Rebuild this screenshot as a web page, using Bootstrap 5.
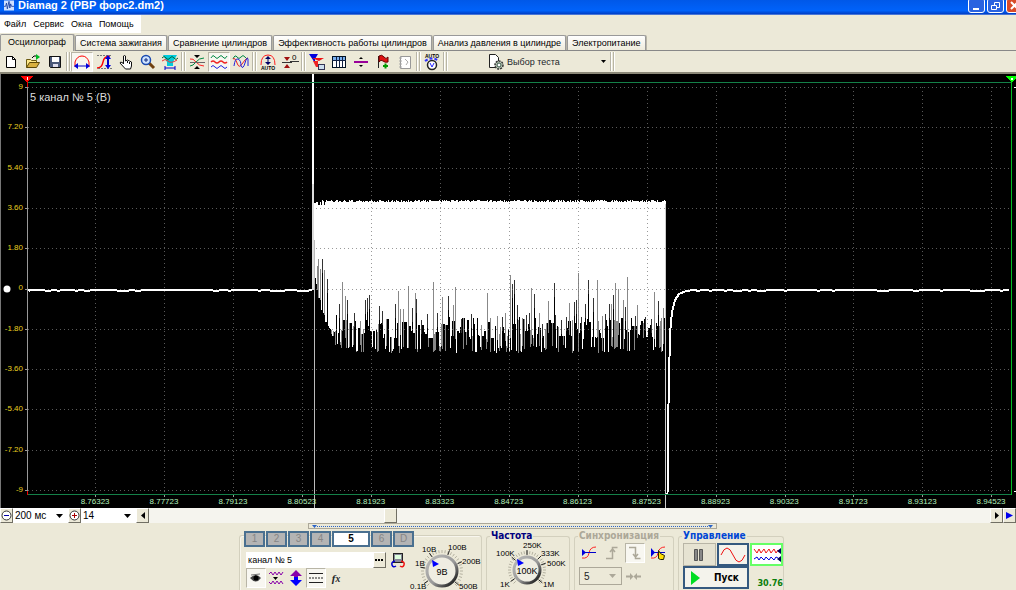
<!DOCTYPE html>
<html lang="ru">
<head>
<meta charset="utf-8">
<meta name="viewport" content="width=device-width, initial-scale=1">
<title>Diamag 2 (РВР форс2.dm2)</title>
<link href="https://cdn.jsdelivr.net/npm/bootstrap@5.3.0/dist/css/bootstrap.min.css" rel="stylesheet">
<style>
:root{--face:#ece9d8;--line:#aca899;--ui:"Liberation Sans",Arial,sans-serif}
body{font:9px/14px var(--ui);background:var(--face);color:#000}
button,input,select{font-family:inherit;border-radius:0}
.btn{--bs-btn-padding-x:0;--bs-btn-padding-y:0;--bs-btn-border-radius:0;--bs-btn-font-size:9px;--bs-btn-line-height:14px}
svg{display:block;flex:none}
.titlebar{height:15px;background:linear-gradient(#0058e8,#0062fa 70%,#0040c8 92%,#7c9ce0);color:#fff}
.titlebar h1{font:bold 11px/14px var(--ui);margin:0 0 5px}
.winbtn{width:17px;height:15px;margin-top:-4px;border:1px solid #fff;border-radius:3px;background:#2a63e0;color:#fff;padding:0}
.winbtn.shut{background:#d84a28}
.menubar{height:19px}
.menubar nav{background:#fff;padding:0 7px 0 4px;gap:7px}
.menubar a{color:#000;text-decoration:none;line-height:18px}
.tabs{height:17px;border-bottom:1px solid #888;gap:1px}
.tabs .nav-link{color:#000;height:15px;padding:0 4px;line-height:14px;border:1px solid #999;border-bottom:0;border-radius:2px 2px 0 0;background:linear-gradient(#fff,#eeebdc);white-space:nowrap;box-shadow:1px 0 0 #b8b5a6}
.tabs .nav-link.active{height:17px;margin-bottom:-1px;background:var(--face);padding:0 7px}
.toolbar{height:23px;border-bottom:2px solid #8b8878}
.tool{width:22px;height:20px;border:1px solid transparent;display:flex;align-items:center;justify-content:center}
.tool.pressed{background:#f8f7f1;border-color:#b8b5a6 #fff #fff #b8b5a6}
.sep{width:5px;height:19px;flex:none;border-left:1px solid #b8b5a6;border-right:1px solid #fff;background:linear-gradient(90deg,#fff 1px,transparent 1px,transparent 2px,#b8b5a6 2px)}
.tests{width:123px;height:20px;gap:2px;margin-left:39px;border:0}
.scope{background:#000;border-left:1px solid #777;min-height:200px;overflow:hidden}
.volts{width:25px;padding:8px 3px 0 0;color:#e8d020;font-size:8px;line-height:10px;text-align:right;z-index:1}
.times{margin-left:26px;height:13px;color:#b4f0bc;font-size:8px;line-height:13px;z-index:1}
.times span{width:6.970%;flex:none;text-align:center}
.times span:first-child{margin-left:3.400%}
.chname{color:#ddd;font-size:11px;line-height:14px;padding:16px 0 0 4px;z-index:1}
.scroller{height:15px;background:#f5f4ee}
.sq{width:13px;height:15px;flex:none;background:var(--face);border:1px solid;border-color:#fff #716f64 #716f64 #fff;display:flex;align-items:center;justify-content:center;padding:0}
.combo{appearance:none;border:0;background:#fff url("data:image/svg+xml,%3Csvg xmlns='http://www.w3.org/2000/svg' width='7' height='4'%3E%3Cpath d='M0 0h7L3.500 4z'/%3E%3C/svg%3E") no-repeat right 5px center;padding:0 0 0 2px;height:15px;width:55px;font-size:10px;line-height:15px}
.combo.off{background-color:var(--face);background-image:url("data:image/svg+xml,%3Csvg xmlns='http://www.w3.org/2000/svg' width='7' height='4'%3E%3Cpath fill='%23aca899' d='M0 0h7L3.500 4z'/%3E%3C/svg%3E");border:1px solid #aca899;height:18px;width:43px;padding-left:4px;color:#222;opacity:1}
.splitter{width:409px;height:6px;margin-left:308px;border:1px solid var(--line);padding:0 3px}
.splitter i{flex:1;height:1px;border-top:1px dotted #2a63c8}
.dock{height:61px;padding-left:239px;overflow:hidden;gap:4px}
.panel{border:1px solid #d3d0be;border-bottom:0;border-radius:3px 3px 0 0;height:64px;box-shadow:inset 1px 1px 0 #f8f6ee;flex:none}
section.panel{margin-top:6px}
fieldset.panel{height:66px;box-shadow:none}
.panel legend{font:bold 10px/14px "DejaVu Sans Condensed","DejaVu Sans",sans-serif;float:none;width:auto;padding:0 1px;margin:0 0 0 3px;color:#000080}
.chan{height:16px;border:2px solid #4a7090;background:#b4b4b4;color:#868686;font-size:10px;line-height:12px;width:21px;padding:0;flex:none}
.chan.on{background:#fff;color:#000;font-weight:bold;width:38px}
.name-in{width:127px;height:16px;border:0;background:#fff;font-size:9px;padding:0 2px;min-width:0}
.ctl{border:2px solid #35597f;background:#f4f3ec;height:23px;width:33px;display:flex;align-items:center;justify-content:center;padding:0}
.ctl.idle{border:1px solid #b8b5a6;background:#e6e3d2}
.ctl.live{border-color:#6f6;background:#fff}
.run{width:67px;font:bold 10px/14px "DejaVu Sans Condensed","DejaVu Sans",sans-serif;gap:14px;justify-content:flex-start;padding-left:6px}
.rate{font:bold 9px/12px "DejaVu Sans Condensed","DejaVu Sans",sans-serif;color:#0a7d0a}
.dial text{font:8px var(--ui)}
.dial .val{font-size:9px}
.small-t{width:20px}
</style>
</head>
<body class="vh-100 overflow-hidden d-flex flex-column">

<header class="titlebar d-flex align-items-center flex-shrink-0">
  <svg class="ms-1 mb-1" width="10" height="11" viewBox="0 0 12 12"><path fill="#cfe0ff" d="M0 0h12v12H0z"/><path d="M0 7h2l1-4 1 7 2-9 1 8 1-5 1 3h3" fill="none" stroke="#123a9c"/></svg>
  <h1 class="ms-1">Diamag 2 (РВР форс2.dm2)</h1>
  <div class="d-flex ms-auto" style="margin-right:-7px;gap:2px">
    <button class="winbtn" aria-label="Свернуть"><svg width="15" height="13"><path d="M4 9h6v2H4z" fill="#fff"/></svg></button>
    <button class="winbtn" aria-label="Восстановить"><svg width="15" height="13" fill="none" stroke="#fff"><path d="M6.500 6V3.500h5v5H9M3.500 6.500h5v4h-5z"/></svg></button>
    <button class="winbtn shut" aria-label="Закрыть"><svg width="15" height="13"><path d="M4 3l7 7M11 3l-7 7" stroke="#fff" stroke-width="2"/></svg></button>
  </div>
</header>

<div class="menubar d-flex align-items-start flex-shrink-0">
  <nav class="d-flex"><a href="#">Файл</a><a href="#">Сервис</a><a href="#">Окна</a><a href="#">Помощь</a></nav>
</div>

<ul class="nav tabs flex-nowrap align-items-end flex-shrink-0">
  <li><a class="nav-link active" href="#">Осциллограф</a></li>
  <li><a class="nav-link" href="#">Система зажигания</a></li>
  <li><a class="nav-link" href="#">Сравнение цилиндров</a></li>
  <li><a class="nav-link" href="#">Эффективность работы цилиндров</a></li>
  <li><a class="nav-link" href="#">Анализ давления в цилиндре</a></li>
  <li><a class="nav-link" href="#">Электропитание</a></li>
</ul>

<div class="toolbar d-flex align-items-center flex-shrink-0">
  <button class="btn tool" aria-label="Новый"><svg width="16" height="16"><path d="M3.500 2.500h6l3 3v8h-9z" fill="#fff" stroke="#000"/><path d="M9.500 2.500v3h3" fill="none" stroke="#000"/></svg></button>
  <button class="btn tool" aria-label="Открыть"><svg width="16" height="16"><path d="M1.500 13.500v-8h4l1 1h5v3" fill="#ffe98a" stroke="#6b5a10"/><path d="M1.500 13.500l3-5h10l-3 5z" fill="#d8b040" stroke="#5a4808"/><path d="M7 4q2-3 4-2" fill="none" stroke="#000"/><path d="M11 0v6l4-3z" fill="#0b2"/></svg></button>
  <button class="btn tool" aria-label="Сохранить"><svg width="16" height="16"><path d="M2.500 2.500h11v11h-10l-1-1z" fill="#4a5878" stroke="#111"/><path d="M5 3h7v5H5z" fill="#fff"/><path d="M6 10h5v3H6z" fill="#dde"/></svg></button>
  <span class="sep"></span>
  <button class="btn tool pressed" aria-label="Ширина"><svg width="18" height="18" fill="none"><path d="M2 14V9q2-6 7-6t7 6v5" stroke="#f00"/><path d="M3 13h12" stroke="#00c"/><path d="M1 13l4-3v6zM17 13l-4-3v6z" fill="#00d"/></svg></button>
  <button class="btn tool" aria-label="Высота"><svg width="18" height="18" fill="none"><path d="M2 15q5 0 6-6t7-6" stroke="#f00" stroke-width="1.500"/><path d="M2 2.500h14M3 15.500h14" stroke="#777" stroke-dasharray="2 1"/><path d="M13 5v8" stroke="#00c" stroke-width="2"/><path d="M13 2l-3 4h6zM13 16l-3-4h6z" fill="#00d"/></svg></button>
  <button class="btn tool" aria-label="Рука"><svg width="16" height="16"><path d="M5.500 10V2q1-1 2 0v5l2-1 2 1 2 1v4l-1 3h-5L2 9q0-2 3 0z" fill="#fff" stroke="#111"/><path d="M9.500 7v2M11.500 8v2" stroke="#111"/></svg></button>
  <button class="btn tool" aria-label="Масштаб"><svg width="16" height="16"><path d="M9 9l5 5" stroke="#704010" stroke-width="3"/><circle cx="6" cy="6" r="4.500" fill="#cfe4ff" stroke="#1a4ab0" stroke-width="1.500"/><path d="M4 6h4M6 4v4" stroke="#102a80"/></svg></button>
  <button class="btn tool" aria-label="Фильтр"><svg width="18" height="18"><path d="M2 2h14l-4 7v4H6V9z" fill="#0cd"/><path d="M1 5q2-3 4 0t4 0 4 0 4 0" fill="none" stroke="#063"/><path d="M1 8q3-3 6 0t9-1" fill="none" stroke="#e33"/><path d="M4 15h10M4 13v4M14 13v4" stroke="#00c"/></svg></button>
  <span class="sep"></span>
  <button class="btn tool" aria-label="Совместить"><svg width="18" height="18" fill="none"><path d="M9 5L6 2h6zM9 13l-3 3h6z" fill="#000"/><path d="M2 6q3-1 6 3t8 4" stroke="#f22"/><path d="M2 13q3 0 6-4t8-4" stroke="#084"/><path d="M2 9.500h15" stroke="#666"/></svg></button>
  <button class="btn tool pressed" aria-label="Раздельно"><svg width="18" height="18" fill="none"><path d="M1 5q2-4 4-1t4 0 4 0 4-1" stroke="#084"/><path d="M1 9q2-2 4 0t4 0 4 0 4 0" stroke="#e22" stroke-width="1.500"/><path d="M1 14q2-3 4 0t4 0 4 0 4 0" stroke="#22d"/></svg></button>
  <button class="btn tool" aria-label="Наложение"><svg width="18" height="18" fill="none"><path d="M1 6q2-5 4-2t4 0 4 0 3 1" stroke="#084"/><path d="M1 6q2-2 4 4t5 1 6-6" stroke="#e22"/><path d="M2 13q1-8 4-7t3 7q2 4 4-3t3-4v7" stroke="#22d"/></svg></button>
  <span class="sep"></span>
  <button class="btn tool" aria-label="Авто"><svg width="18" height="18" fill="none"><path d="M2 12Q2 2 9 2t7 10" stroke="#f22"/><path d="M9 5v6" stroke="#006"/><path d="M9 3L6 6h6zM9 12l-3-3h6z" fill="#006"/><text x="2" y="17" font-size="5" font-weight="bold" fill="#000">AUTO</text></svg></button>
  <button class="btn tool" aria-label="Ноль"><svg width="18" height="18"><path d="M1 9.500h10M9 8.500h9" stroke="#333"/><path d="M3 4h6L6 8zM3 15h6l-3-4z" fill="#a01010"/><text x="11" y="7" font-size="8">0</text></svg></button>
  <span class="sep"></span>
  <button class="btn tool" aria-label="Маркеры"><svg width="18" height="18"><path d="M1 1h9L7 6v4z" fill="#00d"/><path d="M4 5h12l-5 3z" fill="#e11"/><path d="M5 8h5v6H8z" fill="#e22"/><rect x="10.500" y="11.500" width="6" height="5" fill="#cde" stroke="#335"/></svg></button>
  <button class="btn tool" aria-label="Таблица"><svg width="16" height="16"><rect x="1.500" y="2.500" width="13" height="11" fill="#fff" stroke="#012"/><path d="M2 3h12v3H2z" fill="#7ab0f0"/><path d="M1 6.500h14M5.500 3v10M8.500 3v10M11.500 3v10" stroke="#124"/></svg></button>
  <button class="btn tool" aria-label="Разделить"><svg width="16" height="16"><path d="M1 8h14" stroke="#909" stroke-width="2"/><path d="M8 3L6 5h4zM8 13l-2-2h4z"/></svg></button>
  <button class="btn tool" aria-label="Флаг"><svg width="16" height="16"><path d="M3.500 2v12" stroke="#222"/><path d="M4 2q3-2 5 1t4 0v5q-3 1-5-1T4 8z" fill="#d11" stroke="#600"/><path d="M8 12h5M10.500 9.500v5" stroke="#090" stroke-width="2"/></svg></button>
  <button class="btn tool" aria-label="Блокнот"><svg width="16" height="16"><path d="M3.500 2.500h10v12h-10z" fill="#fff" stroke="#999"/><path d="M2 4h3M2 7h3M2 10h3M2 13h3M8 5l3 3-2 3" fill="none" stroke="#aaa"/></svg></button>
  <span class="sep"></span>
  <button class="btn tool" aria-label="Автонастройка"><svg width="18" height="18"><text x="2" y="5" font-size="5" font-weight="bold">AUTO</text><circle cx="9" cy="12" r="4.500" fill="#fff" stroke="#222" stroke-width="1.500"/><path d="M2 8q7-5 14 0" fill="none" stroke="#33f" stroke-width="2" stroke-dasharray="3 2"/><path d="M7 10l2 4 2-4" fill="none" stroke="#22f"/></svg></button>
  <span class="sep"></span>
  <button class="btn tests d-flex align-items-center"><svg width="18" height="18"><path d="M2.500 1.500h6l3 3v10h-9z" fill="#fff" stroke="#222"/><circle cx="12" cy="12" r="4" fill="#bcc8b8" stroke="#333" stroke-width="1.500" stroke-dasharray="2 1"/><circle cx="12" cy="12" r="2" fill="#fff" stroke="#354"/></svg><span>Выбор теста</span><svg class="ms-auto me-1" width="5" height="3"><path d="M0 0h5L2.500 3z"/></svg></button>
  <span class="sep"></span>
</div>

<main class="scope position-relative flex-grow-1 d-flex flex-column">
  <svg id="trace" class="position-absolute top-0 start-0 w-100 h-100" viewBox="1 0 1015 434" preserveAspectRatio="none" shape-rendering="crispEdges"></svg>
  <div class="d-flex flex-grow-1">
    <div class="volts d-flex flex-column justify-content-between">
      <span>9</span><span>7.20</span><span>5.40</span><span>3.60</span><span>1.80</span><span>0</span><span>-1.80</span><span>-3.60</span><span>-5.40</span><span>-7.20</span><span>-9</span>
    </div>
    <div class="chname">5 канал № 5 (В)</div>
  </div>
  <div class="times d-flex position-relative">
    <span>8.76323</span><span>8.77723</span><span>8.79123</span><span>8.80523</span><span>8.81923</span><span>8.83323</span><span>8.84723</span><span>8.86123</span><span>8.87523</span><span>8.88923</span><span>8.90323</span><span>8.91723</span><span>8.93123</span><span>8.94523</span>
  </div>
</main>

<div class="scroller d-flex flex-shrink-0">
  <button class="sq" aria-label="Уменьшить"><svg width="11" height="11"><circle cx="5.500" cy="5.500" r="4.500" fill="#fff" stroke="#333"/><path d="M3 5.500h5" stroke="#00a"/></svg></button>
  <select class="combo" aria-label="Развёртка"><option>200 мс</option></select>
  <button class="sq" aria-label="Увеличить"><svg width="11" height="11"><circle cx="5.500" cy="5.500" r="4.500" fill="#fff" stroke="#333"/><path d="M3 5.500h5M5.500 3v5" stroke="#a00"/></svg></button>
  <select class="combo" aria-label="Масштаб"><option>14</option></select>
  <button class="sq" aria-label="Влево"><svg width="4" height="7"><path d="M4 0v7L0 3.500z"/></svg></button>
  <div class="flex-grow-1 d-flex"><button class="sq" style="margin-left:28%" aria-label="Ползунок"></button></div>
  <button class="sq" aria-label="Вправо"><svg width="4" height="7"><path d="M0 0v7l4-3.500z"/></svg></button>
  <button class="sq" aria-label="В конец"><svg width="7" height="7"><path d="M0 0v7l7-3.500z" fill="#00e"/></svg></button>
</div>

<div class="splitter d-flex align-items-center flex-shrink-0"><svg width="5" height="3"><path d="M0 0h5L2.500 3z" fill="#2a63c8"/></svg><i></i><svg width="5" height="3"><path d="M0 0h5L2.500 3z" fill="#2a63c8"/></svg></div>

<div class="dock d-flex flex-shrink-0">
  <section class="panel d-flex" style="width:243px">
    <div class="ps-1" style="width:166px">
      <div class="d-flex position-relative" style="gap:1px;margin-top:-5px">
        <button class="chan">1</button><button class="chan">2</button><button class="chan">3</button><button class="chan">4</button><button class="chan on">5</button><button class="chan">6</button><button class="chan">D</button>
      </div>
      <div class="d-flex" style="margin:5px 0 0 2px">
        <input class="name-in" value="канал № 5" aria-label="Имя канала"><button class="sq" style="height:16px" aria-label="Выбрать"><svg width="9" height="2"><path d="M0 0h2v2H0zM3 0h2v2H3zM6 0h2v2H6z"/></svg></button>
        <svg class="ms-1" width="16" height="16"><rect x="3.500" y="1.500" width="9" height="9" fill="#889" stroke="#222"/><path d="M5 3h6v4H5z" fill="#dfd"/><path d="M5 9q-4 1-3 4t4 1" fill="none" stroke="#00c" stroke-width="1.500"/><path d="M11 9q4 1 3 4t-4 1" fill="none" stroke="#e11" stroke-width="1.500"/></svg>
      </div>
      <div class="d-flex" style="margin-left:2px">
        <button class="btn tool pressed small-t" aria-label="Видимость"><svg width="14" height="12"><path d="M1 6q6-6 11 0-5 7-11 0z" fill="#444"/><circle cx="7" cy="6" r="2.500"/><path d="M2 3l9-1" stroke="#777"/></svg></button>
        <button class="btn tool small-t" aria-label="Сглаживание"><svg width="16" height="16" fill="none" stroke="#80a"><path d="M1 4l2-2 2 3 2-3 2 3 2-3 2 3 2-3M1 12l2 2 2-3 2 3 2-3 2 3 2-3 2 3"/><path d="M5 7h5L7.500 10z" fill="#000" stroke="none"/></svg></button>
        <button class="btn tool small-t" aria-label="Инверсия"><svg width="14" height="16"><path d="M7 0L1 6h4v3h4V6h4z" fill="#80a"/><path d="M7 16l-6-6h4V7h4v3h4z" fill="#00f"/></svg></button>
        <button class="btn tool pressed small-t" aria-label="Линии"><svg width="16" height="14" stroke="#222"><path d="M1 2.500h14M1 11.500h14"/><path d="M1 7h14" stroke-dasharray="2 1"/></svg></button>
        <button class="btn tool small-t" aria-label="Функция" style="font:italic bold 11px 'Liberation Serif',serif">f<small>x</small></button>
      </div>
    </div>
    <svg class="dial" data-value="9В" width="74" height="58" style="margin-left:1px"></svg>
  </section>

  <fieldset class="panel" style="width:84px">
    <legend>Частота</legend>
    <svg class="dial" data-value="100K" width="82" height="47" viewBox="0 14 82 47" overflow="visible"></svg>
  </fieldset>

  <fieldset class="panel" style="width:100px">
    <legend style="color:#aca899">Синхронизация</legend>
    <div class="d-flex ps-1" style="gap:3px">
      <button class="btn tool small-t" aria-label="Уровень"><svg width="16" height="16"><path d="M1 13q6 1 7-5t7-6" fill="none" stroke="#f22"/><path d="M1 7.500h14" stroke="#00c"/><path d="M1 4v7l4-3.500z" fill="#00d"/></svg></button>
      <button class="btn tool small-t" aria-label="Фронт"><svg width="16" height="16"><path d="M2 13.500h6.500v-11h5M6 7l2.500-3L11 7" fill="none" stroke="#aca899" stroke-width="1.500"/></svg></button>
      <button class="btn tool pressed small-t" aria-label="Спад"><svg width="16" height="16"><path d="M2 2.500h6.500v11h5M6 9l2.500 3L11 9" fill="none" stroke="#aca899" stroke-width="1.500"/></svg></button>
      <button class="btn tool small-t" aria-label="Выбор уровня"><svg width="16" height="16"><path d="M1 13q6 1 7-5t7-6" fill="none" stroke="#f22"/><path d="M1 7.500h14" stroke="#00c"/><path d="M1 3v9l4-4.500z" fill="#00d"/><path d="M8.500 5.500v8l2 1h3l1-4-4-2z" fill="#fd0" stroke="#220"/></svg></button>
    </div>
    <div class="d-flex align-items-center ps-1 gap-1 mt-1">
      <select class="combo off" disabled aria-label="Канал синхронизации"><option>5</option></select>
      <svg width="15" height="9" fill="#aca899"><path d="M0 3.500h4V1l3.500 3.500L4 8V5.500H0zM15 3.500h-4V1L7.500 4.500 11 8V5.500h4z"/></svg>
    </div>
  </fieldset>

  <fieldset class="panel" style="width:106px">
    <legend style="color:#0046d5">Управление</legend>
    <div class="d-flex ps-1" style="gap:1px">
      <button class="ctl idle" aria-label="Пауза"><svg width="10" height="12" fill="#888" stroke="#555"><path d="M.5.5h3v11h-3zM5.500.5h3v11h-3z"/></svg></button>
      <button class="ctl" aria-label="Синус"><svg width="26" height="16"><path d="M1 8Q7-6 13 8t12 0" fill="none" stroke="#e11"/></svg></button>
      <button class="ctl live" aria-label="Потоки"><svg width="28" height="17" fill="none"><path d="M1 3l3 4 2-4 2 4 3-4 2 4 3-4 2 4 3-4 2 4 2-3" stroke="#e11"/><path d="M1 13l3-2 2 3 2-3 3 3 2-3 3 3 2-3 3 3 2-3 2 1" stroke="#00d"/><path d="M28 2v6l-4-3zM28 10v6l-4-3z" fill="#005"/></svg></button>
    </div>
    <div class="d-flex ps-1 align-items-end gap-2">
      <button class="ctl run"><svg width="9" height="14"><path d="M0 0l9 7-9 7z" fill="#0d2"/></svg>Пуск</button>
      <output class="rate">30.76</output>
    </div>
  </fieldset>
</div>

<script src="https://cdn.jsdelivr.net/npm/bootstrap@5.3.0/dist/js/bootstrap.bundle.min.js"></script>
<script>
// Oscilloscope: grid, signal, cursors
const rows = Array.from({length: 11}, (_, i) => Math.round(13 + i * 40.3));
const cols = Array.from({length: 14}, (_, i) => Math.round(95 + i * 68.95));
const path = (d, stroke, extra = '') => `<path d="${d}" fill="none" stroke="${stroke}" ${extra}/>`;
let seed = 7;
const rnd = () => (seed = (seed * 16807) % 2147483647) / 2147483647;

// x, y of the upward gaps under the injector pulse
const peaks = [[314,166],[317,192],[318,185],[320,195],[322,185],[324,196],[327,205],[339,230],[342,208],[345,222],[347,226],[354,239],[365,226],[367,224],[369,221],[379,232],[382,237],[395,230],[398,217],[400,235],[403,235],[408,212],[412,234],[415,219],[416,225],[421,246],[427,240],[433,208],[437,239],[442,223],[448,222],[453,231],[455,213],[461,245],[471,240],[487,219],[490,244],[497,242],[502,243],[505,239],[510,201],[512,210],[514,206],[517,231],[526,241],[529,239],[531,214],[534,220],[539,239],[542,250],[548,227],[554,209],[555,241],[561,246],[566,243],[569,229],[574,228],[576,226],[578,199],[581,243],[585,230],[588,206],[593,224],[597,206],[602,242],[605,240],[609,230],[611,230],[613,221],[615,209],[618,215],[623,226],[625,233],[627,203],[635,242],[637,231],[643,249],[645,243],[651,245],[654,218],[658,227],[663,234]];
const peakAt = new Map(peaks);
let white = '', gray = '', dark = '', base = 262;
for (let x = 314; x < 666; x++) {
  const floor = 279 - 66 * Math.exp(-(x - 314) / 10);
  if (rnd() < .55) base = 14 + rnd() * 22;
  let low = floor - (x < 335 ? base / 2 : base);
  if (rnd() < .24) low = floor - rnd() * 6;
  if (peakAt.has(x)) {
    low = peakAt.get(x);
    if (rnd() < .5) gray += `M${x}.5 ${low}V${Math.round(floor - rnd() * 20)}`;
    else dark += `M${x}.5 ${low}v14`;
  } else if (rnd() < .2) gray += `M${x}.5 ${Math.round(low)}V${Math.round(floor - rnd() * 8)}`;
  white += `M${x}.5 ${126 + (x < 326 ? Math.round(rnd() * 5) : Math.round(rnd() * 2))}V${Math.round(low)}`;
}
let rest = 'M27 216';
for (let x = 30; x < 313; x += 3) rest += `L${x} ${215.6 + Math.round(rnd())}`;
let tail = 'M667.500 420L668.500 330L670 260L672 238L675 226L679 220L686 217L694 216';
for (let x = 697; x <= 1011; x += 3) tail += `L${x} ${215.6 + Math.round(rnd())}`;
const grid = rows.map(y => `M28 ${y}.5H1011`).join('') + cols.map(x => `M${x}.5 13V420`).join('');
document.getElementById('trace').innerHTML =
  path(white, '#fff') + path(gray, '#888') + path(dark, '#333') +
  path(grid, '#777', 'stroke-dasharray="1 3" opacity=".75"') +
  path(rest, '#fff', 'stroke-width="2"') + path(tail, '#fff', 'stroke-width="2"') +
  path('M312.500 125V0', '#fff', 'stroke-width="2"') + path('M312.500 110V216', '#ddd', 'stroke-width="2"') +
  path('M314.500 166V434', '#bbb') + path('M665.500 130V434', '#ccc', 'stroke-width="1.500"') + path('M667.500 330V395', '#fff') +
  path('M27 8.500H1011M27 420.500H1011', '#148048') +
  path('M27.500 8V420', '#999') + path('M27.500 3V14M27.500 416V421', '#e00') +
  path(rows.map(y => `M25 ${y}.5h3`).join('') + cols.map(x => `M${x}.5 421v2`).join(''), '#999') +
  path('M1011.500 4V421', '#0b2') +
  '<path d="M21 2h12l-6 7z" fill="#f00"/><path d="M27.500 3v3" stroke="#fff"/>' +
  '<path d="M1006 2h12l-6 7z" fill="#0f0"/><path d="M1011 4h2v2h-2z" fill="#fff"/>' +
  '<path d="M1013.500 13.500h3M1013.500 417.500h3" stroke="#fff"/><circle cx="7" cy="215" r="3.500" fill="#fff" shape-rendering="auto"/>';

// Rotary selectors
function dial(svg, cx, cy, r, labels) {
  let s = `<defs><linearGradient id="k${cx}" x1="0" y1="0" x2="1" y2="1"><stop stop-color="#bbb"/><stop offset=".55" stop-color="#999"/><stop offset="1" stop-color="#000"/></linearGradient></defs>`;
  for (let a = 135; a <= 405; a += 9) {
    const c = Math.cos(a * Math.PI / 180), n = Math.sin(a * Math.PI / 180);
    s += `<path d="M${cx + c * (r + 1)} ${cy + n * (r + 1)}L${cx + c * (r + 4)} ${cy + n * (r + 4)}" stroke="#b4b1a0" stroke-width="1"/>`;
  }
  labels.forEach(([t, x, y, a]) => {
    const c = Math.cos(a * Math.PI / 180), n = Math.sin(a * Math.PI / 180);
    s += `<path d="M${cx + c * r} ${cy + n * r}L${cx + c * (r + 5)} ${cy + n * (r + 5)}" stroke="#222"/><text x="${x}" y="${y}">${t}</text>`;
  });
  s += `<circle cx="${cx}" cy="${cy}" r="${r - 2}" fill="#efede2" stroke="url(#k${cx})" stroke-width="3"/>`;
  s += `<path d="M${cx - 10} ${cy - 11}l7 4-6 3z" fill="#00f"/>`;
  s += `<text class="val" x="${cx}" y="${cy + 4}" text-anchor="middle">${svg.dataset.value}</text>`;
  svg.innerHTML = s;
}
const [range, freq] = document.querySelectorAll('.dial');
dial(range, 35, 35, 17, [['0.1В',3,53,145],['1В',8,30,190],['10В',15,16,235],['100В',41,14,290],['200В',55,28,335],['500В',52,53,40]]);
dial(freq, 40, 41, 15, [['1K',13,58,145],['100K',9,27,220],['250K',36,19,270],['333K',54,27,315],['500K',60,37,340],['1M',56,58,40]]);
</script>
</body>
</html>
